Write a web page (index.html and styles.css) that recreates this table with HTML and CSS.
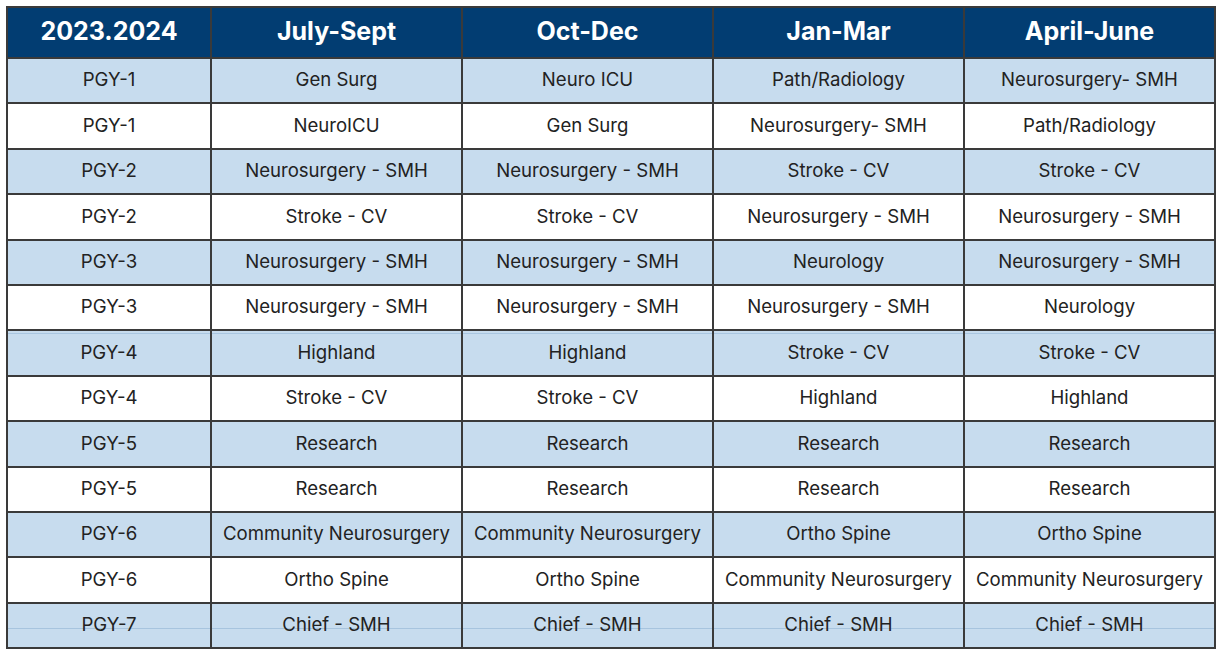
FILE: index.html
```html
<!DOCTYPE html>
<html>
<head>
<meta charset="utf-8">
<link rel="stylesheet" href="styles.css">
</head>
<body>
<table class="rot">
  <colgroup>
    <col class="c-year">
    <col class="c-q"><col class="c-q"><col class="c-q"><col class="c-q">
  </colgroup>
  <thead>
    <tr><th>2023.2024</th><th>July-Sept</th><th>Oct-Dec</th><th>Jan-Mar</th><th>April-June</th></tr>
  </thead>
  <tbody>
    <tr class="alt"><td>PGY-1</td><td>Gen Surg</td><td>Neuro ICU</td><td>Path/Radiology</td><td>Neurosurgery- SMH</td></tr>
    <tr><td>PGY-1</td><td>NeuroICU</td><td>Gen Surg</td><td>Neurosurgery- SMH</td><td>Path/Radiology</td></tr>
    <tr class="alt"><td>PGY-2</td><td>Neurosurgery - SMH</td><td>Neurosurgery - SMH</td><td>Stroke - CV</td><td>Stroke - CV</td></tr>
    <tr><td>PGY-2</td><td>Stroke - CV</td><td>Stroke - CV</td><td>Neurosurgery - SMH</td><td>Neurosurgery - SMH</td></tr>
    <tr class="alt"><td>PGY-3</td><td>Neurosurgery - SMH</td><td>Neurosurgery - SMH</td><td>Neurology</td><td>Neurosurgery - SMH</td></tr>
    <tr><td>PGY-3</td><td>Neurosurgery - SMH</td><td>Neurosurgery - SMH</td><td>Neurosurgery - SMH</td><td>Neurology</td></tr>
    <tr class="alt seam"><td>PGY-4</td><td>Highland</td><td>Highland</td><td>Stroke - CV</td><td>Stroke - CV</td></tr>
    <tr><td>PGY-4</td><td>Stroke - CV</td><td>Stroke - CV</td><td>Highland</td><td>Highland</td></tr>
    <tr class="alt"><td>PGY-5</td><td>Research</td><td>Research</td><td>Research</td><td>Research</td></tr>
    <tr><td>PGY-5</td><td>Research</td><td>Research</td><td>Research</td><td>Research</td></tr>
    <tr class="alt"><td>PGY-6</td><td>Community Neurosurgery</td><td>Community Neurosurgery</td><td>Ortho Spine</td><td>Ortho Spine</td></tr>
    <tr><td>PGY-6</td><td>Ortho Spine</td><td>Ortho Spine</td><td>Community Neurosurgery</td><td>Community Neurosurgery</td></tr>
    <tr class="alt last"><td>PGY-7</td><td>Chief - SMH</td><td>Chief - SMH</td><td>Chief - SMH</td><td>Chief - SMH</td></tr>
  </tbody>
</table>
</body>
</html>
```

FILE: styles.css
```css
html, body {
  margin: 0;
  padding: 0;
  background: #ffffff;
}
body {
  padding: 6px 0 0 6px;
  font-family: "Inter", "Liberation Sans", sans-serif;
  color: #222222;
}
.rot {
  border-collapse: collapse;
  width: 1209px;
  table-layout: fixed;
  border: 2px solid #3a3a3a;
}
.c-year { width: 204px; }
.c-q { width: 251px; }
.rot th, .rot td {
  border: 2px solid #3a3a3a;
  text-align: center;
  padding: 0;
  overflow: hidden;
  white-space: nowrap;
}
.rot th {
  background: #023d72;
  color: #ffffff;
  font-weight: 700;
  font-size: 25px;
  height: 46px;
  padding-bottom: 3px;
}
.rot td {
  font-size: 18.6px;
  height: 40.9px;
  padding-bottom: 2.5px;
  background: #ffffff;
}
.rot tr.alt td {
  background: #c7dcee;
}
.rot tr.seam td {
  background: linear-gradient(#c7dcee 0, #c7dcee 2px, #a9c6e0 2px, #a9c6e0 3px, #c7dcee 3px);
}
.rot tr.last td {
  background: linear-gradient(#c7dcee 0, #c7dcee 24px, #a7c4de 24px, #a7c4de 25px, #c7dcee 25px);
}
```
